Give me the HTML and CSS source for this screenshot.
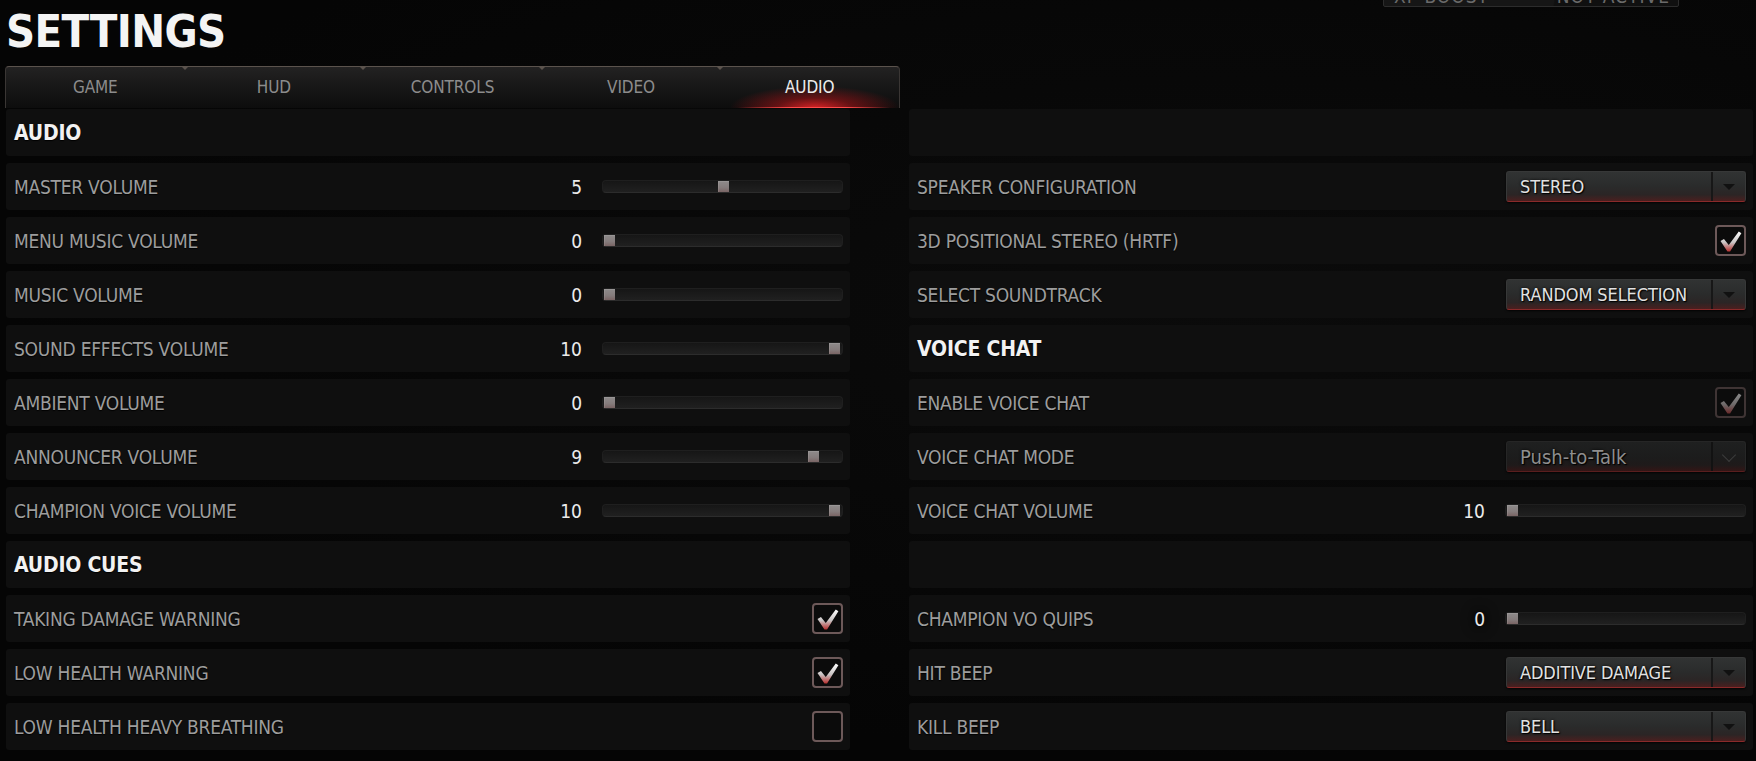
FILE: index.html
```html
<!DOCTYPE html>
<html lang="en">
<head>
<meta charset="utf-8">
<title>Settings</title>
<link rel="stylesheet" href="styles.css">
</head>
<body>
<div class="xp-box"><span class="xp-label">XP BOOST</span><span class="xp-value">NOT ACTIVE</span></div>
<header class="page-head">
  <h1 class="title">SETTINGS</h1>
</header>
<nav class="tabs">
  <div class="tab">GAME</div>
  <div class="tab">HUD</div>
  <div class="tab">CONTROLS</div>
  <div class="tab">VIDEO</div>
  <div class="tab active">AUDIO</div>
</nav>

<main class="grid">
  <!-- row 1 -->
  <div class="row head"><span class="label">AUDIO</span></div>
  <div class="row head"></div>

  <!-- row 2 -->
  <div class="row"><span class="label">MASTER VOLUME</span><div class="slider"><span class="val">5</span><div class="track"><span class="thumb" style="left:50%"></span></div></div></div>
  <div class="row"><span class="label">SPEAKER CONFIGURATION</span><div class="dd"><span class="dd-text">STEREO</span><span class="dd-arrow"></span></div></div>

  <!-- row 3 -->
  <div class="row"><span class="label">MENU MUSIC VOLUME</span><div class="slider"><span class="val">0</span><div class="track"><span class="thumb" style="left:0%"></span></div></div></div>
  <div class="row"><span class="label">3D POSITIONAL STEREO (HRTF)</span><div class="cb"><svg viewBox="0 0 31 31" width="27" height="27"><defs><linearGradient id="ck1" x1="0" y1="0" x2="0" y2="1"><stop offset="0" stop-color="#ffffff"/><stop offset="0.55" stop-color="#c9c4c4"/><stop offset="1" stop-color="#b8302f"/></linearGradient></defs><polygon points="4,15 8,12.5 13.5,19.5 25,4 28,6 15,27 12,27" fill="url(#ck1)"/></svg></div></div>

  <!-- row 4 -->
  <div class="row"><span class="label">MUSIC VOLUME</span><div class="slider"><span class="val">0</span><div class="track"><span class="thumb" style="left:0%"></span></div></div></div>
  <div class="row"><span class="label">SELECT SOUNDTRACK</span><div class="dd"><span class="dd-text">RANDOM SELECTION</span><span class="dd-arrow"></span></div></div>

  <!-- row 5 -->
  <div class="row"><span class="label">SOUND EFFECTS VOLUME</span><div class="slider"><span class="val">10</span><div class="track"><span class="thumb" style="left:100%"></span></div></div></div>
  <div class="row head"><span class="label">VOICE CHAT</span></div>

  <!-- row 6 -->
  <div class="row"><span class="label">AMBIENT VOLUME</span><div class="slider"><span class="val">0</span><div class="track"><span class="thumb" style="left:0%"></span></div></div></div>
  <div class="row"><span class="label">ENABLE VOICE CHAT</span><div class="cb disabled"><svg viewBox="0 0 31 31" width="27" height="27"><defs><linearGradient id="ck2" x1="0" y1="0" x2="0" y2="1"><stop offset="0" stop-color="#8a8a8a"/><stop offset="0.55" stop-color="#6e6a6a"/><stop offset="1" stop-color="#6a2a2a"/></linearGradient></defs><polygon points="4,15 8,12.5 13.5,19.5 25,4 28,6 15,27 12,27" fill="url(#ck2)"/></svg></div></div>

  <!-- row 7 -->
  <div class="row"><span class="label">ANNOUNCER VOLUME</span><div class="slider"><span class="val">9</span><div class="track"><span class="thumb" style="left:90%"></span></div></div></div>
  <div class="row"><span class="label">VOICE CHAT MODE</span><div class="dd disabled"><span class="dd-text mixed">Push-to-Talk</span><span class="dd-arrow chev"></span></div></div>

  <!-- row 8 -->
  <div class="row"><span class="label">CHAMPION VOICE VOLUME</span><div class="slider"><span class="val">10</span><div class="track"><span class="thumb" style="left:100%"></span></div></div></div>
  <div class="row"><span class="label">VOICE CHAT VOLUME</span><div class="slider"><span class="val">10</span><div class="track"><span class="thumb" style="left:0%"></span></div></div></div>

  <!-- row 9 -->
  <div class="row head"><span class="label">AUDIO CUES</span></div>
  <div class="row head"></div>

  <!-- row 10 -->
  <div class="row"><span class="label">TAKING DAMAGE WARNING</span><div class="cb"><svg viewBox="0 0 31 31" width="27" height="27"><defs><linearGradient id="ck3" x1="0" y1="0" x2="0" y2="1"><stop offset="0" stop-color="#ffffff"/><stop offset="0.55" stop-color="#c9c4c4"/><stop offset="1" stop-color="#b8302f"/></linearGradient></defs><polygon points="4,15 8,12.5 13.5,19.5 25,4 28,6 15,27 12,27" fill="url(#ck3)"/></svg></div></div>
  <div class="row"><span class="label">CHAMPION VO QUIPS</span><div class="slider"><span class="val shade">0</span><div class="track"><span class="thumb" style="left:0%"></span></div></div></div>

  <!-- row 11 -->
  <div class="row"><span class="label">LOW HEALTH WARNING</span><div class="cb"><svg viewBox="0 0 31 31" width="27" height="27"><defs><linearGradient id="ck4" x1="0" y1="0" x2="0" y2="1"><stop offset="0" stop-color="#ffffff"/><stop offset="0.55" stop-color="#c9c4c4"/><stop offset="1" stop-color="#b8302f"/></linearGradient></defs><polygon points="4,15 8,12.5 13.5,19.5 25,4 28,6 15,27 12,27" fill="url(#ck4)"/></svg></div></div>
  <div class="row"><span class="label">HIT BEEP</span><div class="dd"><span class="dd-text">ADDITIVE DAMAGE</span><span class="dd-arrow"></span></div></div>

  <!-- row 12 -->
  <div class="row"><span class="label">LOW HEALTH HEAVY BREATHING</span><div class="cb"></div></div>
  <div class="row"><span class="label">KILL BEEP</span><div class="dd"><span class="dd-text">BELL</span><span class="dd-arrow"></span></div></div>
</main>
</body>
</html>
```

FILE: styles.css
```css
* { box-sizing: border-box; }

html, body {
  margin: 0;
  padding: 0;
}

body {
  width: 1756px;
  height: 761px;
  overflow: hidden;
  position: relative;
  background: #060606;
  background-image: radial-gradient(ellipse at 70% 40%, #0b0b0b 0%, #050505 70%);
  font-family: "DejaVu Sans Condensed", "Liberation Sans Narrow", "Liberation Sans", sans-serif;
  color: #9a9a9a;
}

/* partially visible element at the top right */
.xp-box {
  position: absolute;
  left: 1383px;
  top: -20px;
  width: 296px;
  height: 27px;
  border: 1px solid #2c2c2c;
  border-radius: 2px;
  background: linear-gradient(100deg, #161616 0%, #161616 58%, #101010 58.5%, #101010 100%);
  display: flex;
  justify-content: space-between;
  align-items: flex-end;
  padding: 0 8px 0 10px;
  font-size: 19px;
  line-height: 19px;
  color: #6a6a6a;
  letter-spacing: 1px;
}

.page-head {
  height: 66px;
  padding: 9px 0 0 6px;
}

.title {
  margin: 0;
  font-size: 45px;
  line-height: 46px;
  font-weight: bold;
  color: #f4f4f4;
  letter-spacing: -0.6px;
}

.tabs {
  display: flex;
  margin-left: 5px;
  width: 895px;
  height: 42px;
  border-top: 1px solid #5b534d;
  border-left: 1px solid #3a3634;
  border-right: 1px solid #3a3634;
  border-radius: 4px 4px 0 0;
  background: linear-gradient(180deg, #232222 0%, #181818 45%, #0d0d0d 100%);
}

.tab {
  position: relative;
  flex: 1;
  display: flex;
  align-items: center;
  justify-content: center;
  padding-bottom: 2px;
  font-size: 17px;
  color: #8c8c8c;
  letter-spacing: -0.1px;
}

.tab + .tab::before {
  content: "";
  position: absolute;
  left: -4px;
  top: -1px;
  border-left: 4px solid transparent;
  border-right: 4px solid transparent;
  border-top: 4px solid #5b534d;
}

.tab.active {
  color: #ececec;
  background:
    linear-gradient(90deg, transparent 10%, #ff4a4a 40%, #ff4a4a 70%, transparent 95%) bottom / 100% 1px no-repeat,
    radial-gradient(ellipse 85px 22px at 53% 100%, rgba(225, 35, 38, 0.95) 0%, rgba(170, 20, 24, 0.55) 45%, rgba(90, 10, 12, 0) 100%);
}

.grid {
  display: grid;
  grid-template-columns: 844px 844px;
  grid-auto-rows: 47px;
  column-gap: 59px;
  row-gap: 7px;
  margin: 1px 0 0 6px;
}

.row {
  display: flex;
  align-items: center;
  padding: 0 7px 0 8px;
  background: #0f0f0f;
  border-radius: 3px;
}

.label {
  flex: 1;
  font-size: 19px;
  color: #9d9d9d;
  letter-spacing: -0.25px;
  text-shadow: 0 1px 1px #000;
}

.row.head .label {
  font-size: 21px;
  font-weight: bold;
  color: #f2f2f2;
  letter-spacing: -0.2px;
}

/* slider */
.slider {
  display: flex;
  align-items: center;
}

.val {
  width: 40px;
  text-align: right;
  font-size: 19px;
  color: #ebebeb;
  margin-right: 20px;
}

.val.shade {
  text-shadow: 0 0 14px #000, 0 0 6px #000;
}

.track {
  position: relative;
  width: 241px;
  height: 13px;
  border-radius: 4px;
  background: linear-gradient(180deg, #161616 0%, #1c1c1c 60%, #202020 100%);
  border: 1px solid #1f1f1f;
  border-bottom-color: #2c2c2c;
}

.thumb {
  position: absolute;
  top: 0;
  width: 11px;
  height: 11px;
  margin-left: 1px;
  background: linear-gradient(180deg, #8e8b8b 0%, #857c7c 60%, #7a6464 100%);
  box-shadow: inset 1px 1px 0 rgba(255, 255, 255, 0.1);
}

.thumb[style*="100%"] { margin-left: -13px; }
.thumb[style*="90%"] { margin-left: -10px; }
.thumb[style*="50%"] { margin-left: -5px; }

/* dropdown */
.dd {
  display: flex;
  width: 240px;
  height: 31px;
  border-radius: 3px;
  border: 1px solid #373838;
  border-bottom-color: #8a2a2a;
  background: linear-gradient(180deg, #313333 0%, #2a2b2b 50%, #2b2525 78%, #4a1f1f 100%);
  box-shadow: 0 1px 2px rgba(0, 0, 0, 0.8);
  overflow: hidden;
}

.dd-text {
  flex: 1;
  display: flex;
  align-items: center;
  padding-left: 13px;
  font-size: 18px;
  color: #e2e2e2;
  letter-spacing: -0.1px;
  text-shadow: 1px 1px 1px #000, 0 0 3px #000;
}

.dd-arrow {
  position: relative;
  width: 34px;
  border-left: 2px solid #171717;
}

.dd-arrow::after {
  content: "";
  position: absolute;
  left: 50%;
  top: 50%;
  margin: -3px 0 0 -6px;
  border-left: 6px solid transparent;
  border-right: 6px solid transparent;
  border-top: 6px solid #111;
}

.dd.disabled {
  border-color: #262626;
  border-bottom-color: #5a1e1e;
  background: linear-gradient(180deg, #1f2020 0%, #1c1c1c 55%, #1f1a1a 80%, #331616 100%);
}

.dd.disabled .dd-text {
  color: #8e8e8e;
  font-size: 20px;
  letter-spacing: 0;
}

.dd.disabled .dd-arrow {
  border-left-color: #121212;
}

.dd-arrow.chev::after {
  border: none;
  width: 9px;
  height: 9px;
  margin: -7px 0 0 -5px;
  border-right: 1px solid #3c3c3c;
  border-bottom: 1px solid #3c3c3c;
  transform: rotate(45deg);
}

/* checkbox */
.cb {
  width: 31px;
  height: 31px;
  border: 2px solid #6d5959;
  border-radius: 4px;
  background: #0b0b0b;
  display: flex;
  align-items: center;
  justify-content: center;
}

.cb svg { display: block; margin-top: 1px; }

.cb.disabled {
  border-color: #3f3434;
  background: #0c0c0c;
}
```
